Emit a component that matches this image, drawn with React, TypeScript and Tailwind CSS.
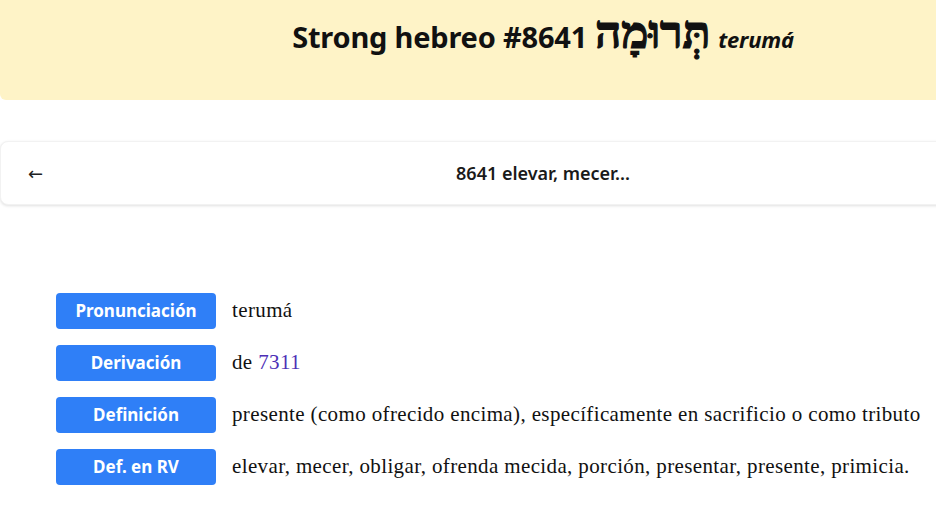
import React from "react";

const rows: { label: string; value: React.ReactNode }[] = [
  { label: "Pronunciación", value: "terumá" },
  {
    label: "Derivación",
    value: (
      <>
        de <a className="text-[#4d2fb6]" style={{ fontVariantNumeric: "oldstyle-nums" }}>7311</a>
      </>
    ),
  },
  { label: "Definición", value: "presente (como ofrecido encima), específicamente en sacrificio o como tributo" },
  { label: "Def. en RV", value: "elevar, mecer, obligar, ofrenda mecida, porción, presentar, presente, primicia." },
];

export default function App() {
  return (
    <div className="w-[936px] h-[522px] overflow-hidden bg-white">
      <div className="w-[1086px]">
        <header className="h-[100px] bg-[#fef3c7] rounded-b-md flex justify-center pt-[10px]">
          <h1 className="flex items-baseline gap-[8px] text-[#111] font-bold text-[29px] leading-[46px] font-['Noto_Sans','Open_Sans',sans-serif] tracking-[-0.2px]">
            <span>Strong hebreo #8641</span>
            <span dir="rtl" className="text-[46px] font-['Liberation_Serif','DejaVu_Serif',serif] font-bold [-webkit-text-stroke:1.2px_#111]">תְּרוּמָה</span>
            <span className="italic text-[22px]">terumá</span>
          </h1>
        </header>
        <nav className="mt-[41px] h-[64px] bg-white rounded-lg shadow-[0_1px_3px_rgba(0,0,0,0.12)] border border-[#f2f2f2] flex items-center px-[27px] relative">
          <span className="text-[18px] text-[#222] font-['DejaVu_Sans',sans-serif]">←</span>
          <span className="absolute left-0 right-0 text-center text-[18px] font-semibold text-[#1a1a1a] font-['Noto_Sans','Open_Sans',sans-serif] pointer-events-none">
            8641 elevar, mecer...
          </span>
        </nav>
        <div className="mt-[88px] pl-[56px] flex flex-col gap-[16px]">
          {rows.map((r) => (
            <div key={r.label} className="flex items-center gap-[16px]">
              <div className="w-[160px] h-[36px] rounded bg-[#2f7ff7] text-white font-bold text-[17px] flex items-center justify-center font-['Noto_Sans','Open_Sans',sans-serif]">
                {r.label}
              </div>
              <div className="text-[21px] tracking-[0.37px] text-[#111] font-['Liberation_Serif',serif] whitespace-nowrap">{r.value}</div>
            </div>
          ))}
        </div>
      </div>
    </div>
  );
}
